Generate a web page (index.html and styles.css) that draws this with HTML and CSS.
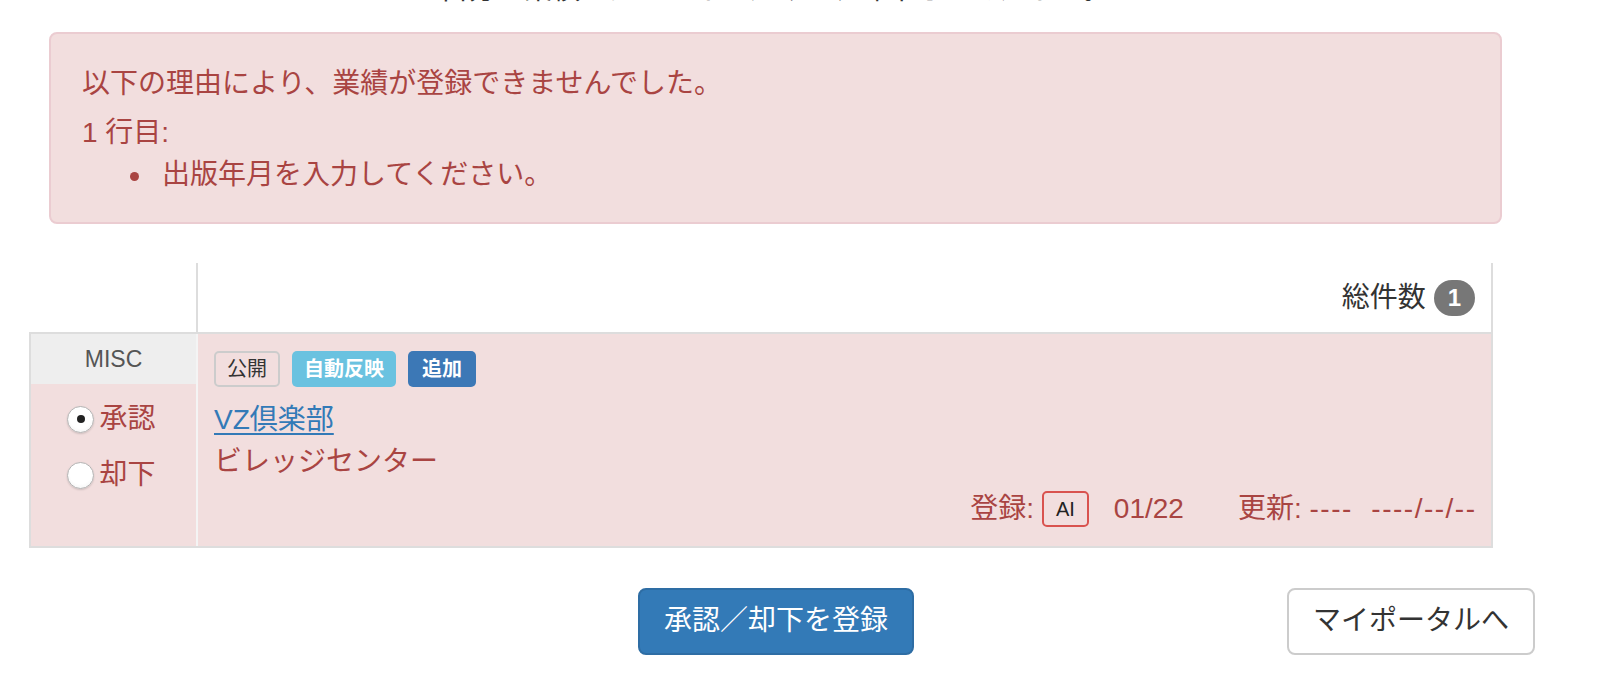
FILE: index.html
```html
<!DOCTYPE html>
<html lang="ja">
<head>
<meta charset="utf-8">
<title>業績承認</title>
<link rel="stylesheet" href="styles.css">
</head>
<body>
<div class="page">
  <p class="intro">自分の業績ではないものだけを、却下してください。</p>

  <div class="alert">
    <p class="alert-title">以下の理由により、業績が登録できませんでした。</p>
    <p class="alert-row">1 行目:</p>
    <ul class="alert-list">
      <li>出版年月を入力してください。</li>
    </ul>
  </div>

  <table class="list">
    <thead>
      <tr>
        <th class="h-side"></th>
        <th class="h-main"><span class="total">総件数 <span class="badge">1</span></span></th>
      </tr>
    </thead>
    <tbody>
      <tr class="row-danger">
        <td class="side">
          <div class="cat">MISC</div>
          <div class="choices">
            <label class="choice"><input type="radio" name="r1" checked><span>承認</span></label>
            <label class="choice"><input type="radio" name="r1"><span>却下</span></label>
          </div>
        </td>
        <td class="main">
          <div class="labels">
            <span class="label label-outline">公開</span>
            <span class="label label-info">自動反映</span>
            <span class="label label-primary">追加</span>
          </div>
          <a class="title" href="#">VZ倶楽部</a>
          <div class="sub">ビレッジセンター</div>
          <div class="meta">
            <span>登録:</span><span class="ai">AI</span><span class="date">01/22</span>
            <span class="upd">更新: <span class="dash">----&nbsp;&nbsp;----/--/--</span></span>
          </div>
        </td>
      </tr>
    </tbody>
  </table>

  <div class="actions">
    <span></span>
    <button class="btn btn-primary" type="button">承認／却下を登録</button>
    <button class="btn btn-default" type="button">マイポータルへ</button>
  </div>
</div>
</body>
</html>
```

FILE: styles.css
```css
html, body {
  margin: 0;
  padding: 0;
  background: #fff;
}
body {
  font-family: "Liberation Sans", "Noto Sans CJK JP", sans-serif;
  font-size: 28px;
  line-height: 42px;
  color: #333;
  overflow: hidden;
}
.page {
  width: 1602px;
}
.intro {
  margin: -31px 0 21px 0;
  padding: 0 100px 0 49px;
  text-align: center;
  color: #333;
}
.alert {
  margin: 0 100px 39px 49px;
  padding: 29px 31px 26px;
  background: #f2dede;
  border: 2px solid #ebccd1;
  border-radius: 8px;
  color: #a94442;
}
.alert p {
  margin: 0;
}
.alert-title {
  margin-bottom: 7px !important;
}
.alert-list {
  margin: 0;
  padding-left: 48px;
  list-style: none;
}
.alert-list li {
  display: flex;
  align-items: center;
}
.alert-list li::before {
  content: "";
  flex: none;
  width: 9px;
  height: 9px;
  border-radius: 50%;
  background: currentColor;
  margin-right: 23px;
  margin-top: 2px;
}

.list {
  margin: 0 109px 0 29px;
  width: 1464px;
  border-collapse: collapse;
}
.list th {
  font-weight: normal;
  padding: 0;
}
.h-side {
  width: 166px;
  border-right: 2px solid #ddd;
  height: 69px;
}
.h-main {
  text-align: right;
  padding: 0 16px !important;
  border-right: 2px solid #ddd;
  border-bottom: 2px solid #ddd;
}
.total {
  display: inline-flex;
  align-items: center;
  gap: 8px;
  color: #333;
}
.badge {
  display: inline-block;
  background: #777;
  color: #fff;
  font-size: 24px;
  font-weight: bold;
  line-height: 24px;
  padding: 6px 14px;
  border-radius: 20px;
}
.row-danger td {
  background: #f2dede;
  vertical-align: top;
  border-top: 2px solid #ddd;
  border-bottom: 2px solid #ddd;
}
.side {
  padding: 0;
  border-left: 2px solid #ddd;
  border-right: 2px solid #f4f4f4;
  color: #a94442;
}
.cat {
  background: #eee;
  color: #555;
  font-size: 23px;
  height: 50px;
  line-height: 50px;
  text-align: center;
}
.choices {
  display: flex;
  flex-direction: column;
  align-items: center;
  gap: 14px;
  padding: 14px 0 0 0;
}
.choice {
  display: flex;
  align-items: center;
  gap: 5px;
  height: 42px;
  margin-right: 4px;
}
.choice input {
  -webkit-appearance: none;
  appearance: none;
  margin: 0;
  width: 27px;
  height: 27px;
  border-radius: 50%;
  border: 1px solid #b3b3b3;
  background: radial-gradient(circle at 50% 40%, #ffffff 55%, #f0f0f0 100%);
  box-shadow: 0 1px 2px rgba(0,0,0,0.15);
  display: grid;
  place-content: center;
}
.choice input:checked::before {
  content: "";
  width: 8px;
  height: 8px;
  border-radius: 50%;
  background: #222;
}
.main {
  padding: 17px 16px 16px 16px;
  border-right: 2px solid #ddd;
  color: #a94442;
}
.labels {
  display: flex;
  gap: 12px;
  height: 36px;
  margin-bottom: 12px;
}
.label {
  display: inline-flex;
  align-items: center;
  height: 36px;
  box-sizing: border-box;
  padding: 0 12px;
  font-size: 20px;
  border-radius: 5px;
  line-height: 1;
}
.label-outline {
  border: 2px solid #ccc;
  color: #333;
  padding: 0 11px;
}
.label-info {
  background: #6ac2e0;
  color: #fff;
  font-weight: bold;
}
.label-primary {
  background: #3c78b6;
  color: #fff;
  font-weight: bold;
  padding: 0 14px;
}
.title {
  display: block;
  color: #337ab7;
  text-decoration: underline;
  text-underline-offset: 4px;
  text-decoration-thickness: 2px;
  width: max-content;
}
.sub {
  color: #a94442;
}
.meta {
  display: flex;
  justify-content: flex-end;
  align-items: center;
  margin-top: 5px;
  color: #a94442;
}
.ai {
  display: inline-flex;
  align-items: center;
  box-sizing: border-box;
  height: 36px;
  margin-left: 8px;
  padding: 0 12px;
  border: 2px solid #d9534f;
  border-radius: 5px;
  color: #222;
  font-size: 20px;
}
.date {
  margin-left: 25px;
}
.upd {
  margin-left: 54px;
  white-space: pre;
}
.dash {
  letter-spacing: 1.5px;
  margin-right: -1.5px;
}

.actions {
  display: grid;
  grid-template-columns: 1fr auto 1fr;
  align-items: center;
  margin: 40px 67px 0 17px;
}
.btn {
  font-family: "Liberation Sans", "Noto Sans CJK JP", sans-serif;
  font-size: 28px;
  line-height: 42px;
  padding: 10px 24px 11px;
  border-radius: 8px;
  border: 2px solid transparent;
  cursor: pointer;
}
.btn-primary {
  background: #337ab7;
  border-color: #2e6da4;
  color: #fff;
}
.btn-default {
  justify-self: end;
  background: #fff;
  border-color: #ccc;
  color: #333;
}
```
